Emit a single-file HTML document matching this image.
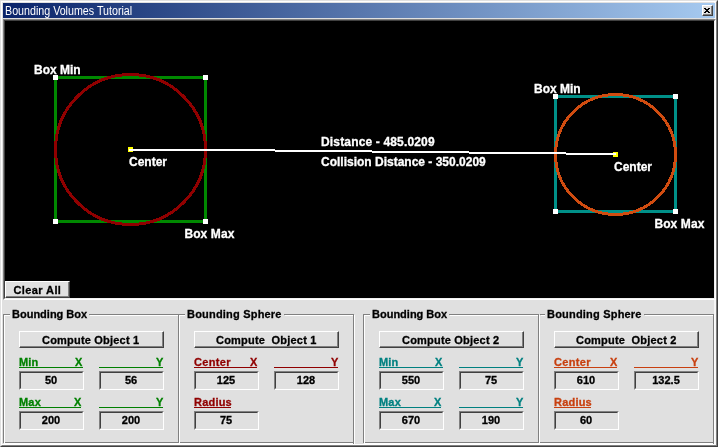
<!DOCTYPE html>
<html><head><meta charset="utf-8"><title>Bounding Volumes Tutorial</title>
<style>
html,body{margin:0;padding:0;}
body{width:718px;height:447px;overflow:hidden;background:#e0e0e0;position:relative;font-family:"Liberation Sans",sans-serif;}
#w{position:absolute;left:0;top:0;width:718px;height:447px;will-change:transform;}
.a{position:absolute;}
.t{position:absolute;white-space:pre;font-weight:bold;font-size:11px;line-height:13px;color:#000;-webkit-text-stroke:0.3px currentColor;}
.btn{position:absolute;box-sizing:border-box;background:#e0e0e0;border-top:1px solid #fff;border-left:1px solid #fff;border-right:1px solid #404040;border-bottom:1px solid #404040;}
.btn:before{content:"";position:absolute;left:0;top:0;right:0;bottom:0;border-right:1px solid #808080;border-bottom:1px solid #808080;}
.fld{position:absolute;box-sizing:border-box;width:65px;height:19px;background:#e0e0e0;border-top:1px solid #808080;border-left:1px solid #808080;border-right:1px solid #fff;border-bottom:1px solid #fff;text-align:center;font-weight:bold;font-size:11px;line-height:13px;padding-top:2px;padding-right:1px;-webkit-text-stroke:0.3px #000;}
.fld:before{content:"";position:absolute;left:0;top:0;right:0;bottom:0;border-top:1px solid #404040;border-left:1px solid #404040;border-right:1px solid #e0e0e0;border-bottom:1px solid #e0e0e0;}
.ul{position:absolute;height:1px;}
.g{position:absolute;background:#808080;}
.h{position:absolute;background:#fff;}
</style></head>
<body>
<div id="w">
<div class="a" style="left:0;top:0;width:718px;height:447px;box-sizing:border-box;border-top:1px solid #e0e0e0;border-left:1px solid #e0e0e0;border-right:1px solid #404040;border-bottom:1px solid #404040;"></div>
<div class="a" style="left:1px;top:1px;width:716px;height:445px;box-sizing:border-box;border-top:1px solid #fff;border-left:1px solid #fff;border-right:1px solid #808080;border-bottom:1px solid #808080;"></div>
<div class="a" style="left:2px;top:2px;width:714px;height:443px;box-sizing:border-box;border-right:2px solid #f6f6f6;border-bottom:1px solid #fff;"></div>
<div class="a" style="left:3px;top:3px;width:712px;height:15px;background:linear-gradient(to right,#0a246a 0%,#a6caf0 100%);"></div>
<div class="a" style="left:5px;top:4px;height:15px;line-height:15px;font-size:12.5px;color:#fff;white-space:nowrap;transform-origin:0 0;transform:scaleX(0.855);">Bounding Volumes Tutorial</div>
<div class="btn" style="left:702px;top:5px;width:11px;height:11px;"><svg class="a" style="left:1px;top:2px" width="6" height="5" viewBox="0 0 6 5" shape-rendering="crispEdges"><rect x="0" y="0" width="2" height="1"/><rect x="4" y="0" width="2" height="1"/><rect x="1" y="1" width="4" height="1"/><rect x="2" y="2" width="2" height="1"/><rect x="1" y="3" width="4" height="1"/><rect x="0" y="4" width="2" height="1"/><rect x="4" y="4" width="2" height="1"/></svg></div>
<div class="a" style="left:3px;top:19px;width:713px;height:281px;box-sizing:border-box;border-top:1px solid #808080;border-left:1px solid #808080;border-right:1px solid #fff;border-bottom:1px solid #fff;"></div>
<div class="a" style="left:4px;top:20px;width:711px;height:279px;box-sizing:border-box;border-top:1px solid #404040;border-left:1px solid #404040;border-right:1px solid #f0f0f0;border-bottom:1px solid #f0f0f0;background:#000;"></div>
<svg class="a" style="left:5px;top:21px" width="709" height="277" viewBox="0 0 709 277" font-family="Liberation Sans, sans-serif" font-weight="bold" font-size="12" fill="#fff" stroke="#fff" stroke-width="0.3">
<rect x="50.5" y="56.5" width="150" height="144" fill="none" stroke="#008800" stroke-width="3" shape-rendering="crispEdges"/>
<circle cx="125.5" cy="128.5" r="75" fill="none" stroke="#900000" stroke-width="3" shape-rendering="crispEdges"/>
<rect x="550.5" y="75.5" width="120" height="115" fill="none" stroke="#009088" stroke-width="3" shape-rendering="crispEdges"/>
<circle cx="610.5" cy="133.5" r="60" fill="none" stroke="#d04c10" stroke-width="3" shape-rendering="crispEdges"/>
<g shape-rendering="crispEdges" stroke="none">
<rect x="123" y="126" width="5" height="5" fill="#ffff00"/>
<rect x="608" y="131" width="5" height="5" fill="#ffff00"/>
<rect x="124" y="128" width="146" height="2"/><rect x="270" y="129" width="97" height="2"/><rect x="367" y="130" width="97" height="2"/><rect x="464" y="131" width="97" height="2"/><rect x="561" y="132" width="50" height="2"/>
<rect x="48" y="54" width="5" height="5"/><rect x="198" y="54" width="5" height="5"/><rect x="48" y="198" width="5" height="5"/><rect x="198" y="198" width="5" height="5"/>
<rect x="548" y="73" width="5" height="5"/><rect x="668" y="73" width="5" height="5"/><rect x="548" y="188" width="5" height="5"/><rect x="668" y="188" width="5" height="5"/>
</g>
<text x="29" y="53">Box Min</text>
<text x="179.4" y="217" letter-spacing="0.1">Box Max</text>
<text x="124" y="145">Center</text>
<text x="529" y="72">Box Min</text>
<text x="649.4" y="207" letter-spacing="0.1">Box Max</text>
<text x="609" y="150">Center</text>
<text x="316" y="125" letter-spacing="0.16">Distance - 485.0209</text>
<text x="316" y="145">Collision Distance - 350.0209</text>
</svg>
<div class="btn" style="left:5px;top:281px;width:65px;height:17px;"></div>
<div class="t" style="left:13.5px;top:284px;letter-spacing:0.4px;">Clear All</div>
<div class="g" style="left:3px;top:314px;width:7px;height:1px"></div>
<div class="h" style="left:4px;top:315px;width:6px;height:1px"></div>
<div class="g" style="left:89px;top:314px;width:96px;height:1px"></div>
<div class="h" style="left:90px;top:315px;width:95px;height:1px"></div>
<div class="g" style="left:284px;top:314px;width:70px;height:1px"></div>
<div class="h" style="left:285px;top:315px;width:69px;height:1px"></div>
<div class="g" style="left:3px;top:442px;width:351px;height:1px"></div>
<div class="h" style="left:4px;top:443px;width:350px;height:1px"></div>
<div class="g" style="left:3px;top:314px;width:1px;height:129px"></div>
<div class="h" style="left:4px;top:315px;width:1px;height:128px"></div>
<div class="g" style="left:178px;top:314px;width:1px;height:129px"></div>
<div class="h" style="left:179px;top:315px;width:1px;height:128px"></div>
<div class="g" style="left:353px;top:314px;width:1px;height:130px"></div>
<div class="h" style="left:354px;top:315px;width:1px;height:129px"></div>
<div class="g" style="left:363px;top:314px;width:7px;height:1px"></div>
<div class="h" style="left:364px;top:315px;width:6px;height:1px"></div>
<div class="g" style="left:449px;top:314px;width:90px;height:1px"></div>
<div class="h" style="left:450px;top:315px;width:89px;height:1px"></div>
<div class="g" style="left:540px;top:314px;width:5px;height:1px"></div>
<div class="h" style="left:541px;top:315px;width:4px;height:1px"></div>
<div class="g" style="left:644px;top:314px;width:70px;height:1px"></div>
<div class="h" style="left:645px;top:315px;width:69px;height:1px"></div>
<div class="g" style="left:363px;top:442px;width:351px;height:1px"></div>
<div class="h" style="left:364px;top:443px;width:350px;height:1px"></div>
<div class="g" style="left:363px;top:314px;width:1px;height:129px"></div>
<div class="h" style="left:364px;top:315px;width:1px;height:128px"></div>
<div class="g" style="left:538px;top:314px;width:1px;height:129px"></div>
<div class="h" style="left:539px;top:315px;width:1px;height:128px"></div>
<div class="g" style="left:713px;top:314px;width:1px;height:130px"></div>
<div class="h" style="left:714px;top:315px;width:1px;height:129px"></div>
<div class="t" style="left:12px;top:308px;">Bounding Box</div>
<div class="btn" style="left:19px;top:331px;width:145px;height:17px;"></div>
<div class="t" style="left:42px;top:334px;letter-spacing:0.2px;">Compute Object 1</div>
<div class="t" style="left:19px;top:356px;color:#008000;letter-spacing:0.2px;">Min</div>
<div class="t" style="left:75px;top:356px;color:#008000;">X</div>
<div class="ul" style="left:19px;top:367px;width:64px;background:#008000"></div>
<div class="t" style="left:156px;top:356px;color:#008000;">Y</div>
<div class="ul" style="left:99px;top:367px;width:64px;background:#008000"></div>
<div class="t" style="left:19px;top:396px;color:#008000;letter-spacing:0.2px;">Max</div>
<div class="t" style="left:74px;top:396px;color:#008000;">X</div>
<div class="ul" style="left:19px;top:407px;width:62px;background:#008000"></div>
<div class="t" style="left:156px;top:396px;color:#008000;">Y</div>
<div class="ul" style="left:99px;top:407px;width:64px;background:#008000"></div>
<div class="fld" style="left:19px;top:371px;">50</div>
<div class="fld" style="left:99px;top:371px;">56</div>
<div class="fld" style="left:19px;top:411px;">200</div>
<div class="fld" style="left:99px;top:411px;">200</div>
<div class="t" style="left:187px;top:308px;letter-spacing:0.2px;">Bounding Sphere</div>
<div class="btn" style="left:194px;top:331px;width:145px;height:17px;"></div>
<div class="t" style="left:216px;top:334px;letter-spacing:0.2px;">Compute  Object 1</div>
<div class="t" style="left:194px;top:356px;color:#900000;letter-spacing:0.35px;">Center</div>
<div class="t" style="left:250px;top:356px;color:#900000;">X</div>
<div class="ul" style="left:194px;top:367px;width:63px;background:#900000"></div>
<div class="t" style="left:331px;top:356px;color:#900000;">Y</div>
<div class="ul" style="left:274px;top:367px;width:64px;background:#900000"></div>
<div class="t" style="left:194px;top:396px;color:#900000;letter-spacing:0.2px;">Radius</div>
<div class="ul" style="left:194px;top:407px;width:37px;background:#900000"></div>
<div class="fld" style="left:194px;top:371px;">125</div>
<div class="fld" style="left:274px;top:371px;">128</div>
<div class="fld" style="left:194px;top:411px;">75</div>
<div class="t" style="left:372px;top:308px;">Bounding Box</div>
<div class="btn" style="left:379px;top:331px;width:145px;height:17px;"></div>
<div class="t" style="left:402px;top:334px;letter-spacing:0.2px;">Compute Object 2</div>
<div class="t" style="left:379px;top:356px;color:#008080;letter-spacing:0.2px;">Min</div>
<div class="t" style="left:435px;top:356px;color:#008080;">X</div>
<div class="ul" style="left:379px;top:367px;width:64px;background:#008080"></div>
<div class="t" style="left:516px;top:356px;color:#008080;">Y</div>
<div class="ul" style="left:459px;top:367px;width:64px;background:#008080"></div>
<div class="t" style="left:379px;top:396px;color:#008080;letter-spacing:0.2px;">Max</div>
<div class="t" style="left:434px;top:396px;color:#008080;">X</div>
<div class="ul" style="left:379px;top:407px;width:62px;background:#008080"></div>
<div class="t" style="left:516px;top:396px;color:#008080;">Y</div>
<div class="ul" style="left:459px;top:407px;width:64px;background:#008080"></div>
<div class="fld" style="left:379px;top:371px;">550</div>
<div class="fld" style="left:459px;top:371px;">75</div>
<div class="fld" style="left:379px;top:411px;">670</div>
<div class="fld" style="left:459px;top:411px;">190</div>
<div class="t" style="left:547px;top:308px;letter-spacing:0.2px;">Bounding Sphere</div>
<div class="btn" style="left:554px;top:331px;width:145px;height:17px;"></div>
<div class="t" style="left:576px;top:334px;letter-spacing:0.2px;">Compute  Object 2</div>
<div class="t" style="left:554px;top:356px;color:#c84010;letter-spacing:0.35px;">Center</div>
<div class="t" style="left:610px;top:356px;color:#c84010;">X</div>
<div class="ul" style="left:554px;top:367px;width:63px;background:#c84010"></div>
<div class="t" style="left:691px;top:356px;color:#c84010;">Y</div>
<div class="ul" style="left:634px;top:367px;width:64px;background:#c84010"></div>
<div class="t" style="left:554px;top:396px;color:#c84010;letter-spacing:0.2px;">Radius</div>
<div class="ul" style="left:554px;top:407px;width:37px;background:#c84010"></div>
<div class="fld" style="left:554px;top:371px;">610</div>
<div class="fld" style="left:634px;top:371px;">132.5</div>
<div class="fld" style="left:554px;top:411px;">60</div>
</div>
</body></html>
